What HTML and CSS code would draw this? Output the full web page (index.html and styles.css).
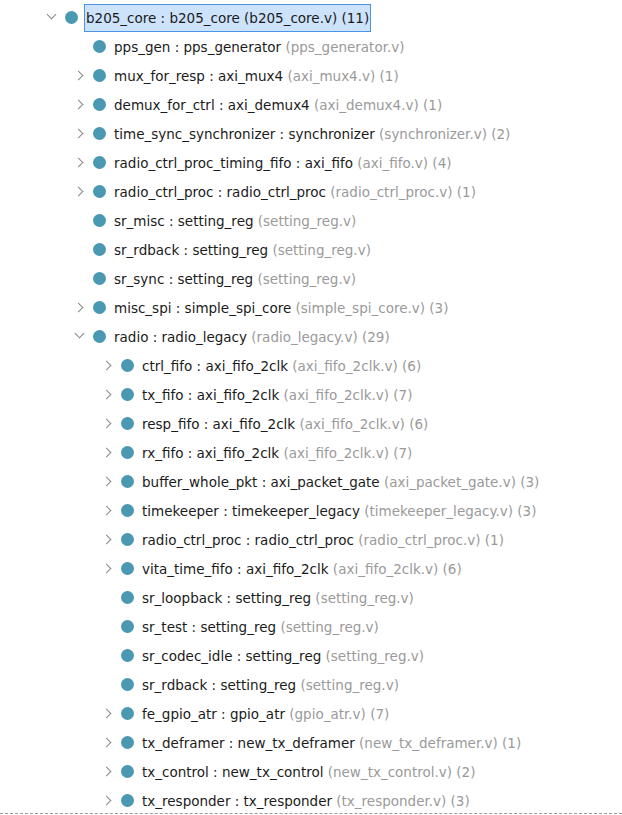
FILE: index.html
```html
<!DOCTYPE html>
<html>
<head>
<meta charset="utf-8">
<link rel="stylesheet" href="styles.css">
</head>
<body>
<div class="tree">
  <div class="row l0"><span class="tw open"></span><span class="dot"></span><span class="label sel">b205_core : b205_core (b205_core.v) (11)</span></div>
  <div class="row l1"><span class="tw"></span><span class="dot"></span><span class="label">pps_gen : pps_generator <span class="dim">(pps_generator.v)</span></span></div>
  <div class="row l1"><span class="tw closed"></span><span class="dot"></span><span class="label">mux_for_resp : axi_mux4 <span class="dim">(axi_mux4.v) (1)</span></span></div>
  <div class="row l1"><span class="tw closed"></span><span class="dot"></span><span class="label">demux_for_ctrl : axi_demux4 <span class="dim">(axi_demux4.v) (1)</span></span></div>
  <div class="row l1"><span class="tw closed"></span><span class="dot"></span><span class="label">time_sync_synchronizer : synchronizer <span class="dim">(synchronizer.v) (2)</span></span></div>
  <div class="row l1"><span class="tw closed"></span><span class="dot"></span><span class="label">radio_ctrl_proc_timing_fifo : axi_fifo <span class="dim">(axi_fifo.v) (4)</span></span></div>
  <div class="row l1"><span class="tw closed"></span><span class="dot"></span><span class="label">radio_ctrl_proc : radio_ctrl_proc <span class="dim">(radio_ctrl_proc.v) (1)</span></span></div>
  <div class="row l1"><span class="tw"></span><span class="dot"></span><span class="label">sr_misc : setting_reg <span class="dim">(setting_reg.v)</span></span></div>
  <div class="row l1"><span class="tw"></span><span class="dot"></span><span class="label">sr_rdback : setting_reg <span class="dim">(setting_reg.v)</span></span></div>
  <div class="row l1"><span class="tw"></span><span class="dot"></span><span class="label">sr_sync : setting_reg <span class="dim">(setting_reg.v)</span></span></div>
  <div class="row l1"><span class="tw closed"></span><span class="dot"></span><span class="label">misc_spi : simple_spi_core <span class="dim">(simple_spi_core.v) (3)</span></span></div>
  <div class="row l1"><span class="tw open"></span><span class="dot"></span><span class="label">radio : radio_legacy <span class="dim">(radio_legacy.v) (29)</span></span></div>
  <div class="row l2"><span class="tw closed"></span><span class="dot"></span><span class="label">ctrl_fifo : axi_fifo_2clk <span class="dim">(axi_fifo_2clk.v) (6)</span></span></div>
  <div class="row l2"><span class="tw closed"></span><span class="dot"></span><span class="label">tx_fifo : axi_fifo_2clk <span class="dim">(axi_fifo_2clk.v) (7)</span></span></div>
  <div class="row l2"><span class="tw closed"></span><span class="dot"></span><span class="label">resp_fifo : axi_fifo_2clk <span class="dim">(axi_fifo_2clk.v) (6)</span></span></div>
  <div class="row l2"><span class="tw closed"></span><span class="dot"></span><span class="label">rx_fifo : axi_fifo_2clk <span class="dim">(axi_fifo_2clk.v) (7)</span></span></div>
  <div class="row l2"><span class="tw closed"></span><span class="dot"></span><span class="label">buffer_whole_pkt : axi_packet_gate <span class="dim">(axi_packet_gate.v) (3)</span></span></div>
  <div class="row l2"><span class="tw closed"></span><span class="dot"></span><span class="label">timekeeper : timekeeper_legacy <span class="dim">(timekeeper_legacy.v) (3)</span></span></div>
  <div class="row l2"><span class="tw closed"></span><span class="dot"></span><span class="label">radio_ctrl_proc : radio_ctrl_proc <span class="dim">(radio_ctrl_proc.v) (1)</span></span></div>
  <div class="row l2"><span class="tw closed"></span><span class="dot"></span><span class="label">vita_time_fifo : axi_fifo_2clk <span class="dim">(axi_fifo_2clk.v) (6)</span></span></div>
  <div class="row l2"><span class="tw"></span><span class="dot"></span><span class="label">sr_loopback : setting_reg <span class="dim">(setting_reg.v)</span></span></div>
  <div class="row l2"><span class="tw"></span><span class="dot"></span><span class="label">sr_test : setting_reg <span class="dim">(setting_reg.v)</span></span></div>
  <div class="row l2"><span class="tw"></span><span class="dot"></span><span class="label">sr_codec_idle : setting_reg <span class="dim">(setting_reg.v)</span></span></div>
  <div class="row l2"><span class="tw"></span><span class="dot"></span><span class="label">sr_rdback : setting_reg <span class="dim">(setting_reg.v)</span></span></div>
  <div class="row l2"><span class="tw closed"></span><span class="dot"></span><span class="label">fe_gpio_atr : gpio_atr <span class="dim">(gpio_atr.v) (7)</span></span></div>
  <div class="row l2"><span class="tw closed"></span><span class="dot"></span><span class="label">tx_deframer : new_tx_deframer <span class="dim">(new_tx_deframer.v) (1)</span></span></div>
  <div class="row l2"><span class="tw closed"></span><span class="dot"></span><span class="label">tx_control : new_tx_control <span class="dim">(new_tx_control.v) (2)</span></span></div>
  <div class="row l2"><span class="tw closed"></span><span class="dot"></span><span class="label">tx_responder : tx_responder <span class="dim">(tx_responder.v) (3)</span></span></div>
</div>
</body>
</html>
```

FILE: styles.css
```css
html, body {
  margin: 0;
  padding: 0;
  background: #ffffff;
}

.tree {
  height: 814px;
  overflow: hidden;
  border-bottom: 1px dashed #9a9a9a;
  padding-top: 3px;
  box-sizing: border-box;
  font-family: "DejaVu Sans", sans-serif;
  font-size: 13.5px;
  color: #1b1b1b;
}

.row {
  height: 29px;
  display: flex;
  align-items: center;
  white-space: nowrap;
}

.l0 { padding-left: 46px; }
.l1 { padding-left: 74px; }
.l2 { padding-left: 102px; }

.tw {
  width: 12px;
  height: 12px;
  flex: none;
  position: relative;
}

.tw.closed::before {
  content: "";
  position: absolute;
  left: 1px;
  top: 2px;
  width: 6px;
  height: 6px;
  border-right: 1.4px solid #8a8a8a;
  border-bottom: 1.4px solid #8a8a8a;
  transform: rotate(-45deg);
}

.tw.open::before {
  content: "";
  position: absolute;
  left: 2px;
  top: -1px;
  width: 6px;
  height: 6px;
  border-right: 1.4px solid #8a8a8a;
  border-bottom: 1.4px solid #8a8a8a;
  transform: rotate(45deg);
}

.dot {
  width: 13px;
  height: 13px;
  border-radius: 50%;
  background: #4a98b1;
  margin-left: 7px;
  flex: none;
}

.label {
  margin-left: 6px;
  padding: 0 1px;
  border: 1px solid transparent;
  line-height: 26px;
}

.label.sel {
  background: #cde2fb;
  border-color: #4a95e6;
}

.dim {
  color: #9a9a9a;
}
```
